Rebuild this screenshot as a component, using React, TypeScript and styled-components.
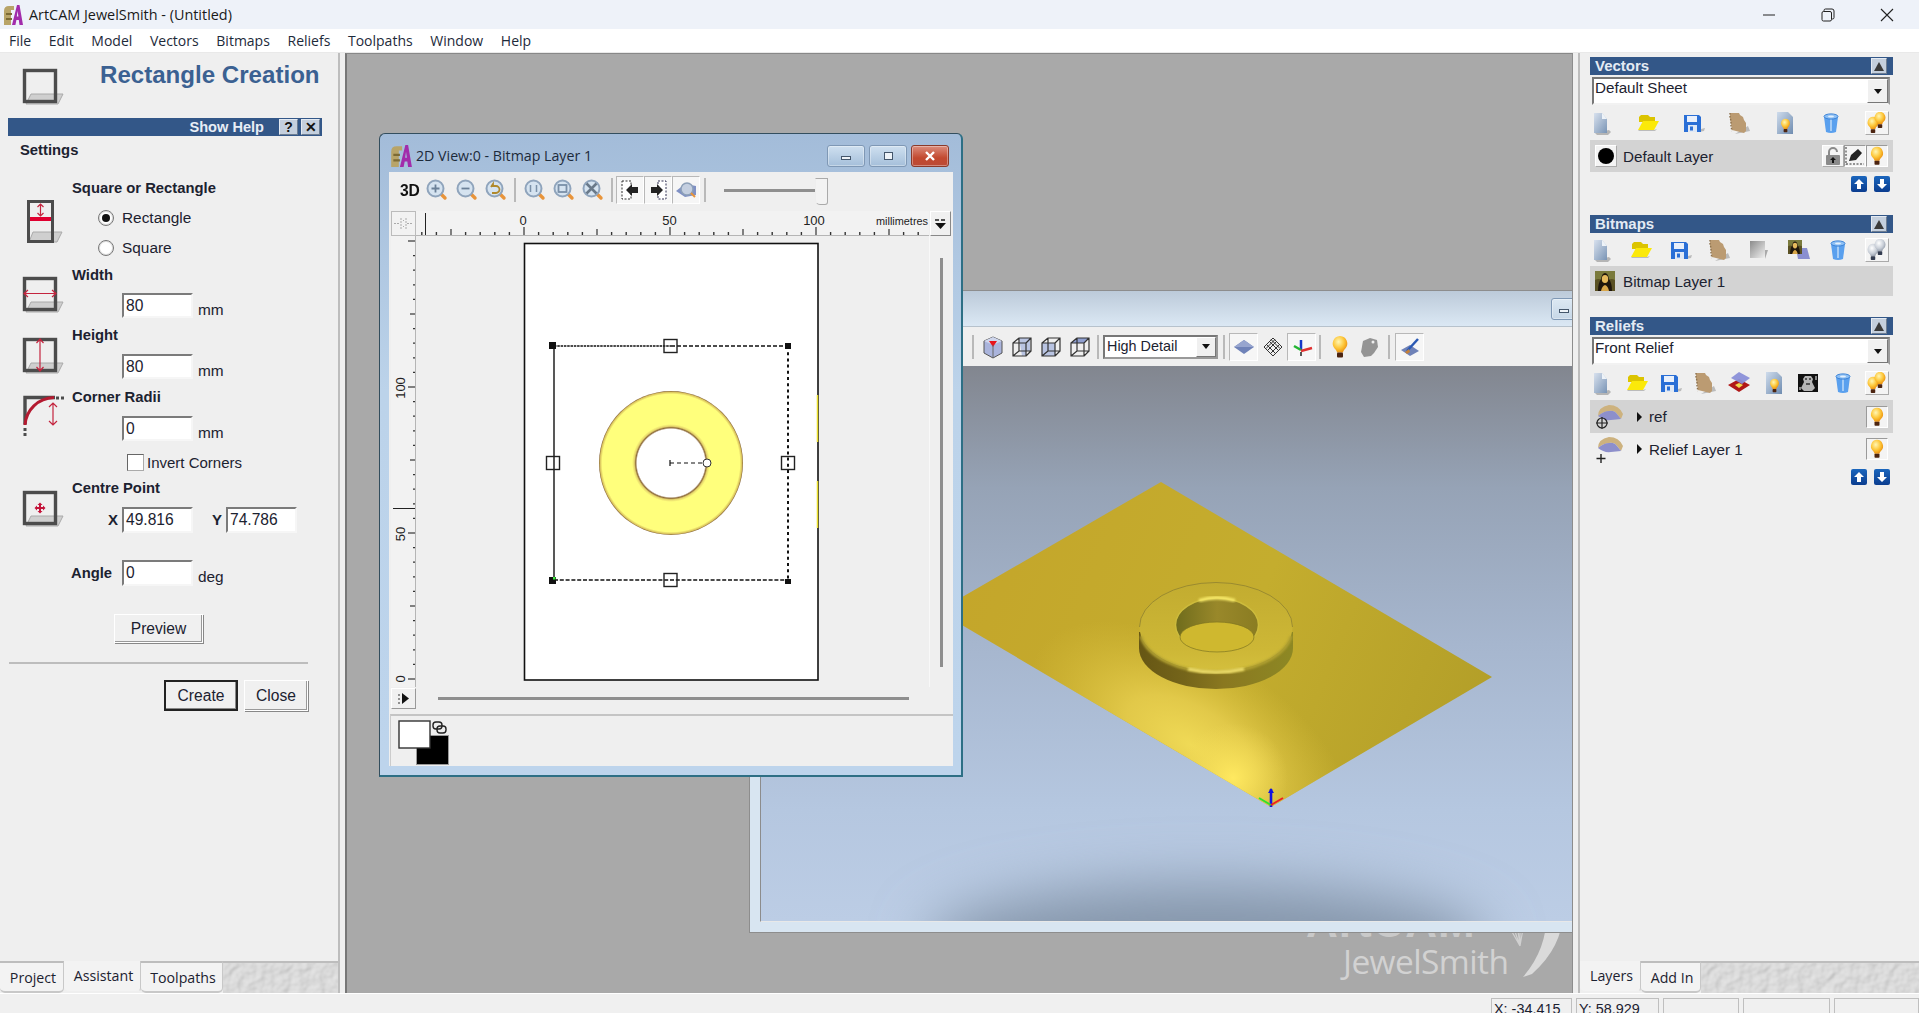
import React from "react";
import styled, { createGlobalStyle } from "styled-components";

const SANS = `"Liberation Sans", Arial, sans-serif`;
const UI = `"Open Sans", "Noto Sans", sans-serif`;
const INK = "#1c2230";
const PANEL = "#efefef";
const BLUE = "#335788";

const Global = createGlobalStyle`
  html, body { margin: 0; height: 100%; overflow: hidden; background: ${PANEL}; }
  #root { height: 100%; }
  * { box-sizing: border-box; }
`;

const Shell = styled.div`
  width: 100%; height: 100vh; display: grid;
  grid-template-rows: 29px 24px minmax(0, 1fr) 20px;
  font-family: ${SANS}; color: ${INK}; overflow: hidden;
`;

/* ---------- title & menu ---------- */
const TitleBar = styled.header`
  background: #eef2f9; display: flex; align-items: center; padding-left: 2px;
  font-family: ${UI}; font-size: 14.4px; color: #1a1a1a; position: relative;
`;
const TitleText = styled.span`margin-left: 5px;`;
const WinControls = styled.div`margin-left: auto; display: flex; height: 100%; padding-right: 3px;`;
const WinControl = styled.div`width: 59px; display: flex; align-items: center; justify-content: center;`;
const MenuBar = styled.nav`
  background: #fff; display: flex; align-items: center; font-family: ${UI}; font-size: 14px;
  color: #1d2a3a; padding-left: 9px; gap: 17.65px; border-bottom: 1px solid #e9e9e9;
`;

/* ---------- main columns ---------- */
const Main = styled.main`display: flex; min-height: 0;`;
const LeftPanel = styled.aside`
  width: 340px; flex: none; background: ${PANEL}; border-right: 2px solid #bdbdbd;
  display: flex; flex-direction: column;
`;
const Gutter = styled.div`width: 5px; flex: none; background: ${PANEL};`;
const Mdi = styled.div`
  flex: 1; position: relative; overflow: hidden; background: #a9a9a9;
  border-left: 2px solid #777; border-right: 1px solid #8d8d8d; border-top: 1px solid #888;
`;
const RightPanel = styled.aside`
  width: 341px; flex: none; background: ${PANEL}; border-left: 2px solid #bdbdbd;
  display: flex; flex-direction: column; padding-left: 10px;
`;

/* ---------- left panel ---------- */
const PanelBody = styled.div`flex: 1; min-height: 0;`;
const FormHead = styled.div`height: 65px; display: flex; padding: 15px 0 0 22px;`;
const FormTitle = styled.h1`
  margin: -9px 0 0 36px; font-size: 24.1px; line-height: 32px; font-weight: bold; color: #3b6192;
`;
const HelpBar = styled.div`
  margin-left: 8px; width: 314px; height: 18px; background: ${BLUE}; color: #e8eef6;
  display: flex; align-items: center; justify-content: flex-end; padding-right: 2px; gap: 3px;
  font-weight: bold; font-size: 14.6px;
`;
const HelpLabel = styled.span`margin-right: 12px;`;
const MiniBtn = styled.span`
  width: 19px; height: 16px; background: #c4cfdd; color: #111; font-size: 14px; font-weight: bold;
  display: flex; align-items: center; justify-content: center; line-height: 1;
  border: 1px solid; border-color: #e4eaf2 #6d7d92 #6d7d92 #e4eaf2;
`;
const SettingsLabel = styled.div`margin: 4px 0 0 20px; font: bold 14.8px/20px ${SANS};`;
const Section = styled.section<{ $top: number }>`
  display: grid; grid-template-columns: 72px 1fr; margin-top: ${(p) => p.$top}px;
`;
const IconSlot = styled.div<{ $x: number; $y: number }>`padding: ${(p) => p.$y}px 0 0 ${(p) => p.$x}px;`;
const FieldLabel = styled.div`font: bold 14.8px/20px ${SANS}; white-space: nowrap;`;
const RadioRow = styled.label<{ $top?: number }>`
  display: flex; align-items: center; height: 30px; padding-left: 26px; gap: 8px; font-size: 15.4px;
  margin-top: ${(p) => p.$top ?? 0}px;
`;
const Radio = styled.span<{ $on?: boolean }>`
  width: 16px; height: 16px; border-radius: 50%; background: #fff; border: 1.5px solid #777;
  box-shadow: inset 0 0 0 1px #ddd; display: flex; align-items: center; justify-content: center;
  &::after { content: ""; width: 8px; height: 8px; border-radius: 50%; background: ${(p) => (p.$on ? "#111" : "transparent")}; }
`;
const FieldRow = styled.div<{ $top: number; $left?: number }>`
  display: flex; margin-top: ${(p) => p.$top}px; padding-left: ${(p) => p.$left ?? 50}px;
`;
const TextBox = styled.div<{ $h?: number }>`
  width: 71px; height: ${(p) => p.$h ?? 25}px; background: #fff; font-size: 15.6px; padding-left: 2px;
  display: flex; align-items: center; line-height: 1; flex: none;
  border: 2px solid; border-color: #7b7b7b #f6f6f6 #f6f6f6 #7b7b7b;
`;
const Unit = styled.span`margin: 9px 0 0 5px; font-size: 15.4px; line-height: 16px;`;
const AxisLabel = styled.span<{ $gap?: number }>`
  width: 14px; margin-left: ${(p) => p.$gap ?? 0}px; font: bold 15px/26px ${SANS};
`;
const CheckRow = styled.div`display: flex; align-items: center; gap: 3px; margin-top: 13px; padding-left: 55px; font-size: 15px; height: 16px;`;
const CheckBox = styled.span`
  width: 17px; height: 17px; background: #fff; border: 1.5px solid; border-color: #666 #aaa #aaa #666;
`;
const AngleRow = styled.div`display: flex; margin-top: 27px; padding-left: 71px;`;
const AngleLabel = styled.span`width: 51px; font: bold 14.8px/26px ${SANS};`;
const PushBtn = styled.div<{ $w: number; $h: number; $default?: boolean }>`
  width: ${(p) => p.$w}px; height: ${(p) => p.$h}px; background: #f0f0f0; font-size: 15.6px;
  display: flex; align-items: center; justify-content: center;
  border: ${(p) => (p.$default ? "2px solid #222" : "1px solid #fff")};
  box-shadow: ${(p) => (p.$default ? "inset -1px -1px 0 #888" : "1px 1px 0 #888, inset -1px -1px 0 #999")};
`;
const PreviewRow = styled.div`margin-top: 28px; padding-left: 114px;`;
const FormRule = styled.hr`margin: 19px 0 0 9px; width: 299px; height: 2px; background: #bdbdbd; border: 0;`;
const ActionRow = styled.div`display: flex; justify-content: flex-end; gap: 6px; margin-top: 16px; padding-right: 30px;`;

/* ---------- tabs ---------- */
const TabStrip = styled.div`height: 32px; flex: none; display: flex; overflow: hidden;`;
const RightTabs = styled(TabStrip)`margin-left: -10px;`;
const Tab = styled.div<{ $w: number; $active?: boolean }>`
  width: ${(p) => p.$w}px; flex: none; background: #f3f3f3; font-family: ${UI}; font-size: 14.2px;
  display: flex; justify-content: center; align-items: ${(p) => (p.$active ? "flex-start" : "center")};
  padding: ${(p) => (p.$active ? 5 : 0)}px 0 0 3px; border-radius: 0 0 5px 5px;
  border-top: ${(p) => (p.$active ? "0" : "2px solid #bdbdbd")};
  border-bottom: 2px solid ${(p) => (p.$active ? PANEL : "#c8c8c8")};
  border-right: 1px solid #c8c8c8; color: ${INK};
`;
const TabFiller = styled.div`flex: 1; background: #dcdcdc; border-top: 2px solid #bdbdbd; min-width: 0; line-height: 0;`;
const Texture = () => (
  <svg width="100%" height="100%">
    <filter id="grain" x="0" y="0" width="100%" height="100%">
      <feTurbulence type="fractalNoise" baseFrequency=".11" numOctaves="2" seed="4" />
      <feDiffuseLighting lightingColor="#e6e6e6" surfaceScale="1.1">
        <feDistantLight azimuth={45} elevation={62} />
      </feDiffuseLighting>
    </filter>
    <rect width="100%" height="100%" filter="url(#grain)" />
  </svg>
);

/* ---------- right panel ---------- */
const PanelHeader = styled.div<{ $top?: number }>`
  width: 303px; height: 18px; background: ${BLUE}; color: #e4ebf4; font: bold 15px/18px ${SANS};
  padding-left: 5px; display: flex; justify-content: space-between; align-items: center; padding-right: 6px;
  margin-top: ${(p) => p.$top ?? 0}px; flex: none;
`;
const Collapse = styled.span`
  width: 16px; height: 16px; background: #c4cfdd; display: flex; align-items: center; justify-content: center;
  border: 1px solid; border-color: #e4eaf2 #6d7d92 #6d7d92 #e4eaf2;
  &::after { content: ""; border: 5px solid transparent; border-top: 0; border-bottom: 9px solid #3a3a3a; }
`;
const Combo = styled.div`
  width: 298px; height: 28px; margin: 2px 0 0 2px; background: #fff; font-size: 15.2px; padding: 0 0 0 1px;
  line-height: 18px; display: flex; justify-content: space-between; flex: none;
  border: 2px solid; border-color: #777 #999 #f2f2f2 #777;
`;
const ComboArrow = styled.span`
  width: 21px; height: 24px; margin-top: 0; background: #f0f0f0; display: flex; align-items: center; justify-content: center;
  border: 1px solid; border-color: #fff #777 #777 #fff;
  &::after { content: ""; border: 4.5px solid transparent; border-bottom: 0; border-top: 5px solid #111; }
`;
const IconRow = styled.div<{ $h: number }>`
  width: 300px; margin-left: -1px; height: ${(p) => p.$h}px; display: flex; justify-content: space-between; align-items: center; flex: none;
`;
const LayerRow = styled.div<{ $h: number; $on?: boolean }>`
  width: 303px; height: ${(p) => p.$h}px; background: ${(p) => (p.$on ? "#d3d3d3" : "transparent")};
  display: flex; align-items: center; padding: 0 5px; font-size: 15.2px; flex: none;
`;
const LayerGlyph = styled.span<{ $w: number }>`width: ${(p) => p.$w}px; flex: none; display: flex; align-items: center;`;
const LayerName = styled.span`flex: 1;`;
const ExpandMark = styled.span`
  width: 0; height: 0; border: 5px solid transparent; border-right: 0; border-left: 5px solid #111; margin-right: 7px; flex: none;
`;
const ToggleCell = styled.span<{ $sunken?: boolean; $size?: number }>`
  width: ${(p) => p.$size ?? 22}px; height: ${(p) => p.$size ?? 22}px; display: flex; align-items: center; justify-content: center; flex: none; background: #f4f4f4;
  border: 1px solid; border-color: ${(p) => (p.$sunken ? "#9a9a9a #fff #fff #9a9a9a" : "#fff #aaa #aaa #fff")};
`;
const OrderRow = styled.div`width: 303px; display: flex; justify-content: flex-end; gap: 7px; padding-right: 3px; margin-top: 4px; flex: none;`;
const OrderBtn = styled.span`
  width: 16px; height: 16px; border-radius: 2px; background: linear-gradient(#1b66bd, #0b3d8f);
  display: flex; align-items: center; justify-content: center; line-height: 0;
`;

/* ---------- document windows ---------- */
const DocWindow = styled.section<{ $x: number; $y: number; $w: number; $h: number }>`
  position: absolute; left: ${(p) => p.$x}px; top: ${(p) => p.$y}px; width: ${(p) => p.$w}px; height: ${(p) => p.$h}px;
  display: flex; flex-direction: column;
`;
const Frame2D = styled(DocWindow)`
  background: linear-gradient(#a3bcd9, #bcd3ea 40%, #bdd4ec);
  border: 1px solid #334e5e; border-bottom: 2px solid #2d6f85; border-right: 2px solid #2d6f85;
  border-radius: 6px 6px 0 0; padding: 0 8px 9px 9px; z-index: 2;
`;
const Frame3D = styled(DocWindow)`
  background: #d8e5f1; border: 1px solid #8d8d8d; padding: 0 0 10px 10px;
`;
const DocTitle = styled.div<{ $h: number }>`
  height: ${(p) => p.$h}px; padding-top: 5px; display: flex; align-items: center; flex: none; font-family: ${UI}; font-size: 14.2px; color: #1c2a3a;
`;
const Title3D = styled(DocTitle)`
  margin-left: -10px; padding: 0 2px 0 0; background: linear-gradient(#bccad9, #dbe8f4); border-bottom: 1px solid #b7c2cc; justify-content: flex-end;
`;
const DocName = styled.span`margin-left: 3px; flex: 1;`;
const CapBtn = styled.span<{ $kind?: "close" }>`
  width: 38px; height: 22px; margin-right: 4px; border-radius: 3px; display: flex; align-items: center; justify-content: center;
  background: ${(p) => (p.$kind === "close" ? "linear-gradient(#dc8d7d, #c2492f 60%, #bb4a36)" : "linear-gradient(#cfe0f0, #a5bfda)")};
  border: 1px solid ${(p) => (p.$kind === "close" ? "#8b3a2a" : "#7f98b5")};
  box-shadow: inset 0 0 0 1px rgba(255,255,255,.35);
`;
const CapBtnSmall = styled(CapBtn)`width: 26px; margin: 0 30px 0 0; background: linear-gradient(#dce8f3, #c7d7e7);`;
const CapGlyph = styled.span<{ $kind: "min" | "max" }>`
  display: block; border: 1.5px solid #44566b; background: #eef3f8;
  width: ${(p) => (p.$kind === "min" ? 10 : 9)}px; height: ${(p) => (p.$kind === "min" ? 4 : 8)}px;
  margin-top: ${(p) => (p.$kind === "min" ? 5 : 0)}px;
`;
const Client = styled.div`flex: 1; min-height: 0; background: ${PANEL}; display: flex; flex-direction: column; position: relative;`;
const Toolbar = styled.div<{ $h: number; $pad: number }>`
  height: ${(p) => p.$h}px; padding-left: ${(p) => p.$pad}px; display: flex; align-items: center; flex: none; background: ${PANEL};
`;
const ThreeD = styled.span`font: bold 17px/1 ${SANS}; transform: scaleX(.92); width: 23px; color: #111;`;
const ToolBtn = styled.span<{ $w?: number; $pressed?: boolean }>`
  width: ${(p) => p.$w ?? 29}px; height: 28px; display: flex; align-items: center; justify-content: center; flex: none;
  background: ${(p) => (p.$pressed ? "#f6f6f6" : "transparent")};
  border: 1px solid; border-color: ${(p) => (p.$pressed ? "#b8b8b8 #fff #fff #b8b8b8" : "transparent")};
`;
const ToolSep = styled.span<{ $l?: number; $r?: number }>`
  width: 2px; height: 24px; background: #b9b9b9; flex: none;
  margin: 0 ${(p) => p.$r ?? 4}px 0 ${(p) => p.$l ?? 3}px;
`;
const SliderTrack = styled.span`
  width: 91px; height: 3px; margin-left: 14px; background: #8f8f8f; position: relative; flex: none;
  &::after { content: ""; position: absolute; right: -13px; top: -11px; width: 11px; height: 25px; background: #f3f3f3; border: 1px solid #aaa; border-left-color: #eee; border-radius: 0 0 3px 5px; }
`;
const DetailCombo = styled.span`
  width: 115px; height: 24px; background: #fff; font: 14.4px/1 ${SANS}; display: flex; align-items: center; justify-content: space-between; padding-left: 2px; flex: none;
  border: 2px solid; border-color: #777 #999 #999 #777;
`;
const MiniArrow = styled(ComboArrow)`height: 20px; width: 20px; margin-bottom: 0;`;
const RulerRow = styled.div`margin-top: 3px; height: 25px; display: flex; padding-left: 2px; flex: none; line-height: 0;`;
const RulerCorner = styled.span`width: 25px; height: 25px; flex: none; background: #f2f2f2; border: 1px solid #bbb; display: flex; align-items: center; justify-content: center; line-height: 0;`;
const RulerEnd = styled.span`
  width: 21px; height: 25px; margin-left: 1px; flex: none; display: flex; align-items: center; justify-content: center; line-height: 0;
  background: #f0f0f0; border: 1px solid; border-color: #fff #888 #888 #fff;
`;
const CanvasRow = styled.div`height: 451px; display: flex; padding-left: 2px; flex: none; line-height: 0;`;
const ScrollColumn = styled.div`width: 24px; flex: none; display: flex; justify-content: center; padding: 22px 0 20px; border-left: 1px solid #f8f8f8;`;
const ScrollV = styled.span`width: 3px; height: 100%; background: #8e8e8e;`;
const ScrollRow = styled.div`height: 20px; margin-top: 1px; padding-left: 2px; display: flex; align-items: center; flex: none; border-bottom: 0;`;
const ScrollStart = styled.span`width: 25px; height: 21px; flex: none; background: #f0f0f0; border: 1px solid; border-color: #fff #999 #999 #fff; display: flex; align-items: center; justify-content: center; line-height: 0;`;
const ScrollH = styled.span`width: 471px; height: 3px; margin-left: 22px; background: #8e8e8e;`;
const SwatchPanel = styled.div`margin-top: 6px; margin-left: 1px; flex: 1; border-top: 2px solid #c4c4c4; border-left: 1px solid #ccc; position: relative; padding: 4px 0 0 7px; line-height: 0;`;
const Viewport = styled.div`
  flex: 1; min-height: 0; overflow: hidden; line-height: 0; border-left: 1px solid #8c8c8c; border-bottom: 1px solid #e8e8e8;
  background: linear-gradient(#82868f 0%, #96a3b6 22%, #a6b6ce 50%, #b5c7e0 80%, #bccde5 100%);
`;
const Watermark = styled.div`
  position: absolute; right: 0; bottom: 13px; width: 266px; height: 80px; color: #d2d2d2;
`;
const WatermarkBrand = styled.span`
  position: absolute; left: 0; top: 0; font: bold 44px/44px ${SANS}; letter-spacing: 1px; color: #c9c9c9; white-space: nowrap;
`;
const WatermarkName = styled.span`
  position: absolute; left: 37px; bottom: 0; font: 400 33.5px/38px ${UI}; letter-spacing: -.6px;
`;
const WatermarkMark = styled.svg`position: absolute; left: 180px; top: 0;`;

/* ---------- status ---------- */
const StatusBar = styled.footer`
  background: #f0f0f0; border-top: 1px solid #fff; display: flex; justify-content: flex-end; gap: 4px; overflow: hidden;
`;
const StatusCell = styled.div<{ $w: number }>`
  width: ${(p) => p.$w}px; margin-top: 4px; border: 1px solid #bfbfbf; border-bottom: 0; font: 14.4px/20px ${SANS}; padding-left: 2px; white-space: nowrap;
`;

/* ---------- icons ---------- */
const Ic = ({ s = 24, vb = "0 0 24 24", children }: { s?: number; vb?: string; children: React.ReactNode }) => (
  <svg width={s} height={s} viewBox={vb}>{children}</svg>
);

const FormIcon = ({ w = 42, h = 38, children, vb = "0 0 42 38" }: { w?: number; h?: number; vb?: string; children?: React.ReactNode }) => (
  <svg width={w} height={h} viewBox={vb}>
    <path d="M9 26h32l-5 10H4z" fill="#cfcfcf" stroke="#aaa" />
    <rect x="2.5" y="2.5" width="31" height="31" fill="none" stroke="#4c4c4c" strokeWidth="3.4" />
    {children}
  </svg>
);

const Arrowed = ({ d }: { d: string }) => <path d={d} fill="none" stroke="#c4243e" strokeWidth="1.2" />;

const AppLogo = ({ s = 22 }: { s?: number }) => (
  <svg width={s} height={s} viewBox="0 0 22 22">
    <path d="M2 21V7Q2 2 7 2h5v4H9v15z" fill="#b8a468" />
    <path d="M4 9h6v2H4zM4 14h6v2H4z" fill="#7c6a34" />
    <path d="M10 21L15 1h2.500L21 21h-3.500l-.7-5h-2.400l-1 5zM14.800 12.500h1.600L15.600 7z" fill="#a22cab" />
  </svg>
);

const Mag = ({ children }: { children?: React.ReactNode }) => (
  <Ic>
    <path d="M15 15l5 5" stroke="#e8943a" strokeWidth="3.4" strokeLinecap="round" />
    <circle cx="10.5" cy="10.5" r="8" fill="#d5e3f0" stroke="#8fa4bc" strokeWidth="2" />
    {children}
  </Ic>
);

const PageIcon = () => (
  <Ic>
    <path d="M6 22l14-3 2 2-3 3H8z" fill="#b5b5b5" />
    <defs>
      <linearGradient id="pg" x1="0" y1="0" x2="1" y2="1"><stop offset="0" stopColor="#d8e1ee" /><stop offset="1" stopColor="#7994b5" /></linearGradient>
    </defs>
    <path d="M5 2h8l5 6v14H5z" fill="url(#pg)" />
    <path d="M13 2v6h5z" fill="#eef3f8" />
  </Ic>
);
const FolderIcon = () => (
  <Ic>
    <path d="M4 6l2-2h7l2 2h5v5H4z" fill="#dcc400" />
    <path d="M8 10h16l-5 9H3z" fill="#fbe90a" />
    <path d="M3 19h16l3-1-2 2H4z" fill="#bbb" />
  </Ic>
);
const SaveIcon = () => (
  <Ic>
    <path d="M20 18l4-1-1 3-5 1z" fill="#bbb" />
    <path d="M3 4h15l2 2v15H3z" fill="#2a6fd6" />
    <rect x="6" y="5" width="10" height="6" fill="#e9f0fb" />
    <rect x="7" y="14" width="9" height="7" fill="#dfe8f5" />
    <rect x="9" y="15.5" width="3" height="4" fill="#2a6fd6" />
  </Ic>
);
const ScrapIcon = () => (
  <Ic>
    <path d="M8 23l15-3-2-5z" fill="#bbb" />
    <path d="M3 2h9l1 2 3 2 1 3 2 3v8l-2 2-12-3-1-6-1-5z" fill="#bb9b72" />
    <path d="M3 2v4l1 4v5l1 5" fill="none" stroke="#8d7350" strokeDasharray="1.5 1.5" strokeWidth="1.4" />
  </Ic>
);
const Bulb = ({ s = 24, x = 0, y = 0, grey = false }: { s?: number; x?: number; y?: number; grey?: boolean }) => (
  <svg x={x} y={y} width={s} height={s} viewBox="0 0 24 24">
    <defs>
      <radialGradient id="bulbY" cx=".4" cy=".35" r=".7"><stop offset="0" stopColor="#fff6b4" /><stop offset=".55" stopColor="#fdc73a" /><stop offset="1" stopColor="#e98a0a" /></radialGradient>
      <radialGradient id="bulbG" cx=".4" cy=".35" r=".7"><stop offset="0" stopColor="#fff" /><stop offset=".6" stopColor="#c9cfd8" /><stop offset="1" stopColor="#8f97a5" /></radialGradient>
    </defs>
    <path d="M12 1a7.6 7.6 0 0 0-5 13c1.2 1.2 1.8 2.2 2 3.6h6c.2-1.4.8-2.4 2-3.6a7.6 7.6 0 0 0-5-13z" fill={grey ? "url(#bulbG)" : "url(#bulbY)"} />
    <rect x="9" y="17.6" width="6" height="5" rx="1" fill={grey ? "#333c50" : "#4c2410"} />
  </svg>
);
const BulbPage = () => (
  <Ic>
    <defs><linearGradient id="bp" x1="0" y1="0" x2="1" y2="1"><stop offset="0" stopColor="#cfdcec" /><stop offset="1" stopColor="#6f8cb0" /></linearGradient></defs>
    <path d="M4 1h11l5 5v17H4z" fill="url(#bp)" />
    <Bulb s={15} x={5} y={7} />
  </Ic>
);
const BinIcon = () => (
  <Ic>
    <path d="M5 6h14l-2 15q-5 2-10 0z" fill="#5aa0ee" />
    <path d="M12 7v13" stroke="#a5ccf6" strokeWidth="2" />
    <ellipse cx="12" cy="5.5" rx="7" ry="2.6" fill="#8ec0f5" stroke="#3c84d8" />
    <ellipse cx="12" cy="5.5" rx="3" ry="1" fill="#e3f0fc" />
  </Ic>
);
const BulbsBtn = ({ grey }: { grey?: boolean }) => (
  <ToggleCell $size={24}>
    <svg width="22" height="22" viewBox="0 0 22 22">
      <Bulb s={18} x={-2} y={4} grey={grey} />
      <Bulb s={18} x={5} y={-1} grey={grey} />
    </svg>
  </ToggleCell>
);
const GreyPlate = () => (
  <Ic>
    <defs><linearGradient id="gp" x1="0" y1="0" x2="1" y2="1"><stop offset="0" stopColor="#8b8b8b" /><stop offset="1" stopColor="#f0f0f0" /></linearGradient></defs>
    <rect x="3" y="3" width="15" height="17" fill="url(#gp)" />
    <path d="M18 12l3 0-3 9z" fill="#aaa" />
  </Ic>
);
const Mona = ({ s = 20 }: { s?: number }) => (
  <svg width={s} height={s} viewBox="0 0 20 20">
    <rect width="20" height="20" fill="#5a5124" />
    <path d="M0 0h20v9q-4-2-6 0H6q-2-2-6 0z" fill="#7a7a3c" />
    <path d="M3 20q0-8 3-12 1-6 4-6t4 6q3 4 3 12z" fill="#1f160c" />
    <ellipse cx="10" cy="8" rx="3.2" ry="4" fill="#e5b95c" />
    <path d="M6 20q1-5 4-6 3 1 4 6z" fill="#d8a64a" />
  </svg>
);
const MonaLayer = () => (
  <Ic>
    <path d="M10 10h11l3 11H12z" fill="#8a8fd0" />
    <svg x="2" y="2" width="14" height="14" viewBox="0 0 20 20"><Mona s={20} /></svg>
  </Ic>
);
const ReliefStack = () => (
  <Ic>
    <path d="M12 8l11 6-11 7L1 14z" fill="#b01818" />
    <path d="M12 12l4 2-4 3-4-3z" fill="#f2d84a" />
    <path d="M12 1l11 6-8 6-11-6z" fill="#8a8fd8" opacity=".95" />
  </Ic>
);
const XRay = () => (
  <Ic>
    <rect x="2" y="3" width="20" height="18" fill="#111" />
    <path d="M9 5h6l2 3-1 3 3 6-3 3H8l-3-3 3-6-1-3z" fill="#b5b5b5" />
    <path d="M9 8h2M13 8h2M10 13h4" stroke="#333" strokeWidth="1.4" />
    <path d="M20 5v4M4 16v3" stroke="#fff" />
  </Ic>
);
const ReliefGlyph = ({ mark }: { mark: "target" | "plus" }) => (
  <svg width="30" height="28" viewBox="0 0 30 28">
    <path d="M3 13q0-9 11-11 10 0 14 9l-2 5-4-5q-3-4-8-3-7 1-11 5z" fill="#cdb27e" />
    <path d="M3 13q6-5 11-5 5-1 8 3l4 5-10 1q-7 1-13-4z" fill="#8d8fcb" />
    {mark === "target" ? (
      <g fill="none" stroke="#222" strokeWidth="1.2"><circle cx="7" cy="20" r="5" /><path d="M7 14v12M1 20h12" /></g>
    ) : (
      <path d="M6 19v9M1.500 23.500h9" stroke="#222" strokeWidth="1.4" />
    )}
  </svg>
);
const Up = ({ down }: { down?: boolean }) => (
  <svg width="12" height="12" viewBox="0 0 12 12">
    <path d={down ? "M6 11L1 6h3V1h4v5h3z" : "M6 1l5 5H8v5H4V6H1z"} fill="#fff" />
  </svg>
);
const DefaultLayerDot = () => (
  <ToggleCell>
    <svg width="18" height="18" viewBox="0 0 18 18"><circle cx="9" cy="9" r="8" fill="#000" /></svg>
  </ToggleCell>
);
const Lock = () => (
  <svg width="20" height="20" viewBox="0 0 20 20">
    <path d="M6 9V6a4 4 0 0 1 8 0" fill="none" stroke="#8b8b8b" strokeWidth="2" />
    <rect x="3" y="9" width="14" height="10" rx="1" fill="#8a8a8a" />
    <path d="M10 11l3 3h-2v3H9v-3H7z" fill="#111" />
  </svg>
);
const Pen = () => (
  <svg width="20" height="20" viewBox="0 0 20 20">
    <path d="M1 1v18M1 18h18" stroke="#333" strokeDasharray="2 1.500" />
    <path d="M4 15l2-6 7-6 4 4-6 7z" fill="#222" />
  </svg>
);
const Cube = ({ face }: { face: "iso" | "front" | "right" | "top" }) => (
  <Ic>
    {face === "iso" ? (
      <>
        <path d="M12 2l9 4v12l-9 5-9-5V6z" fill="#aab4dc" stroke="#555" />
        <path d="M3 6l9 4 9-4-9-4z" fill="#cfd6ec" />
        <path d="M8 6h8l-4 6z" fill="#e8141c" />
        <path d="M12 10v13" stroke="#666" />
      </>
    ) : (
      <>
        {face === "front" && <path d="M9 3h11v13H16v4l-4 1z" fill="#b9c4e2" />}
        {face === "right" && <rect x="3" y="8" width="13" height="13" fill="#b9c4e2" />}
        {face === "top" && <path d="M3 8l6-5h12l-5 5z" fill="#8f9fd0" />}
        <path d="M3 8h13v13H3zM9 3h12v13H9zM3 8l6-5M16 8l5-5M3 21l6-5M16 21l5-5" fill="none" stroke="#333" strokeWidth="1.2" />
      </>
    )}
  </Ic>
);

/* ---------- drawings for the 2D view ---------- */
const ticks = (n: number) => Array.from({ length: n }, (_, i) => i);

const HRuler = () => (
  <svg width="513" height="25" viewBox="416 211 513 25" fontFamily={SANS}>
    <rect x="416" y="211" width="513" height="25" fill="#f2f2f2" />
    <path d="M416 235.500h513" stroke="#b5b5b5" />
    {ticks(42).map((i) => {
      const x = 524 + (i - 8) * 14.6;
      const major = (i - 8) % 10 === 0;
      const mid = !major && (i - 8) % 5 === 0;
      return <path key={i} d={`M${x} 235V${major ? 227 : mid ? 229 : 232}`} stroke="#333" strokeWidth={major || mid ? 1.2 : 1.4} />;
    })}
    <path d="M425.500 213V235" stroke="#222" />
    <text x="523" y="225" fontSize="13" textAnchor="middle" fill="#222">0</text>
    <text x="669.500" y="225" fontSize="13" textAnchor="middle" fill="#222">50</text>
    <text x="814" y="225" fontSize="13" textAnchor="middle" fill="#222">100</text>
    <text x="876" y="225" fontSize="11" textLength="52" lengthAdjust="spacingAndGlyphs" fill="#222">millimetres</text>
  </svg>
);

const VRuler = () => (
  <svg width="25" height="451" viewBox="391 236 25 451" fontFamily={SANS}>
    <rect x="391" y="236" width="25" height="451" fill="#f2f2f2" />
    <path d="M415.500 236V687" stroke="#b5b5b5" />
    {ticks(31).map((i) => {
      const y = 679 - i * 14.6;
      const major = i % 10 === 0;
      const mid = !major && i % 5 === 0;
      return <path key={i} d={`M415 ${y}H${major ? 408 : mid ? 410 : 413}`} stroke="#333" strokeWidth="1.2" />;
    })}
    <path d="M393 508.500h22" stroke="#222" />
    <text transform="translate(405 679) rotate(-90)" fontSize="13" textAnchor="middle" fill="#222">0</text>
    <text transform="translate(405 534) rotate(-90)" fontSize="13" textAnchor="middle" fill="#222">50</text>
    <text transform="translate(405 388) rotate(-90)" fontSize="13" textAnchor="middle" fill="#222">100</text>
  </svg>
);

const handle = (x: number, y: number) => (
  <rect key={`${x}-${y}`} x={x - 6.500} y={y - 6.500} width="13" height="13" fill="none" stroke="#222" strokeWidth="1.4" />
);

const Sheet = () => (
  <svg width="513" height="451" viewBox="416 236 513 451">
    <defs>
      <radialGradient id="ringFill" gradientUnits="userSpaceOnUse" cx="671" cy="463" r="72">
        <stop offset="0" stopColor="#fff" />
        <stop offset=".47" stopColor="#fff" />
        <stop offset=".49" stopColor="#8d6a3a" />
        <stop offset=".51" stopColor="#e6d56c" />
        <stop offset=".54" stopColor="#ffff7c" />
        <stop offset=".955" stopColor="#ffff7c" />
        <stop offset=".985" stopColor="#d8c05c" />
        <stop offset="1" stopColor="#7d5a30" />
      </radialGradient>
    </defs>
    <rect x="524.500" y="243.500" width="293.500" height="436.500" fill="#fff" stroke="#111" strokeWidth="1.6" />
    <path d="M817.500 395v47M817.500 481v47" stroke="#e8dc2a" strokeWidth="1.500" />
    <circle cx="671" cy="463" r="72" fill="url(#ringFill)" />
    <g fill="none" stroke="#111">
      <path d="M554 346H671" strokeWidth="1.600" strokeDasharray="2.500 .8" />
      <path d="M671 346H788" strokeWidth="1.400" strokeDasharray="4 2" />
      <path d="M554 346V580" strokeWidth="1.400" />
      <path d="M788 346V580" strokeWidth="2" strokeDasharray="3 3.200" />
      <path d="M554 580H788" strokeWidth="1.400" strokeDasharray="4 1.800" />
      <path d="M670 463H703" strokeWidth="1.200" strokeDasharray="4 3" />
      <path d="M670 460v6" strokeWidth="1.200" />
    </g>
    <rect x="549" y="342" width="7" height="7" fill="#111" />
    <rect x="785" y="343" width="6" height="6" fill="#111" />
    <rect x="549" y="577" width="7" height="7" fill="#111" />
    <rect x="553" y="577" width="2.500" height="2.500" fill="#3cf03c" />
    <rect x="785" y="579" width="6" height="5" fill="#111" />
    {handle(670.500, 346)}{handle(670.500, 580)}{handle(553, 463)}{handle(788, 463)}
    <circle cx="707" cy="463" r="4" fill="#fff" stroke="#333" />
  </svg>
);

const Swatches = () => (
  <svg width="54" height="46" viewBox="0 0 54 46">
    <rect x="18.500" y="15.500" width="32" height="29" fill="#000" stroke="#999" />
    <rect x="1" y="1" width="31" height="27" fill="#fff" stroke="#333" strokeWidth="1.4" />
    <g fill="none" stroke="#222" strokeWidth="1.400">
      <rect x="35" y="2" width="9" height="7" rx="3" />
      <rect x="39" y="6" width="9" height="7" rx="3" />
    </g>
  </svg>
);

/* ---------- drawing for the 3D view ---------- */
const Scene = () => (
  <svg width="812" height="556" viewBox="760 366 812 556">
    <defs>
      <linearGradient id="plate" gradientUnits="userSpaceOnUse" x1="940" y1="520" x2="1490" y2="740">
        <stop offset="0" stopColor="#c4a52a" />
        <stop offset=".55" stopColor="#c4ad2e" />
        <stop offset="1" stopColor="#b29e28" />
      </linearGradient>
      <radialGradient id="glow" gradientUnits="userSpaceOnUse" cx="1190" cy="745" r="150" gradientTransform="translate(1190 745) rotate(32) scale(1.2 .62) translate(-1190 -745)">
        <stop offset="0" stopColor="#f0da56" />
        <stop offset=".4" stopColor="#e9d050" stopOpacity=".8" />
        <stop offset="1" stopColor="#dcc23e" stopOpacity="0" />
      </radialGradient>
      <radialGradient id="tip" gradientUnits="userSpaceOnUse" cx="1232" cy="778" r="55">
        <stop offset="0" stopColor="#ffe960" />
        <stop offset="1" stopColor="#f4dc58" stopOpacity="0" />
      </radialGradient>
      <linearGradient id="wall" x1="0" y1="0" x2="1" y2="0">
        <stop offset="0" stopColor="#665614" />
        <stop offset=".3" stopColor="#75651a" />
        <stop offset=".55" stopColor="#8a7820" />
        <stop offset="1" stopColor="#8d8824" />
      </linearGradient>
      <linearGradient id="cap" x1="0" y1="0" x2="0" y2="1">
        <stop offset="0" stopColor="#c2ac30" />
        <stop offset=".75" stopColor="#cdb736" />
        <stop offset="1" stopColor="#d4bf3d" />
      </linearGradient>
      <linearGradient id="bore" x1="0" y1="0" x2="1" y2="0">
        <stop offset="0" stopColor="#6f6c1c" />
        <stop offset=".5" stopColor="#99882a" />
        <stop offset="1" stopColor="#8a7c22" />
      </linearGradient>
      <filter id="blur3d" x="-30%" y="-80%" width="160%" height="260%"><feGaussianBlur stdDeviation="28" /></filter>
      <filter id="soft" x="-20%" y="-60%" width="140%" height="220%"><feGaussianBlur stdDeviation="1" /></filter>
    </defs>
    <ellipse cx="1206" cy="945" rx="280" ry="62" fill="#8596ab" filter="url(#blur3d)" />
    <path d="M1160 482L1491 677 1270 807 937 611z" fill="url(#plate)" />
    <path d="M1160 482L1491 677 1270 807 937 611z" fill="url(#glow)" />
    <path d="M1160 482L1491 677 1270 807 937 611z" fill="url(#tip)" />
    <path d="M1138 632h154v16a77 41 0 0 1-154 0z" fill="url(#wall)" />
    <ellipse cx="1215" cy="627" rx="76.500" ry="44.500" fill="url(#cap)" />
    <path d="M1138.500 627a76.500 44.500 0 0 1 153 0" fill="none" stroke="#8f8230" strokeWidth=".8" />
    <path d="M1140 636a76 43 0 0 0 150 0" fill="none" stroke="#b3a232" strokeWidth="3" filter="url(#soft)" />
    <path d="M1187 669a76 44 0 0 0 56 0" fill="none" stroke="#f2e270" strokeWidth="3" filter="url(#soft)" />
    <ellipse cx="1216" cy="625" rx="41.500" ry="27" fill="url(#bore)" stroke="#cdbb3c" strokeWidth="1.500" />
    <path d="M1198 600.500a41.500 27 0 0 1 36 0" fill="none" stroke="#f6e868" strokeWidth="3.400" filter="url(#soft)" />
    <path d="M1179 637a37 15 0 0 1 74 0 37 15 0 0 1-74 0z" fill="#cfb82f" stroke="#7e7420" strokeWidth=".7" />
    <path d="M1270 807v-18" stroke="#1414e0" strokeWidth="2.600" />
    <path d="M1267 793l3-5 3 5" fill="#1414e0" />
    <path d="M1270 805l-12-7" stroke="#2ee02e" strokeWidth="2" />
    <path d="M1270 805l12-7" stroke="#ee2020" strokeWidth="2" />
  </svg>
);

const App = () => (
  <Shell>
    <Global />
    <TitleBar>
      <AppLogo />
      <TitleText>ArtCAM JewelSmith - (Untitled)</TitleText>
      <WinControls>
        <WinControl><svg width="14" height="14" viewBox="0 0 14 14"><path d="M1 7h12" stroke="#222" strokeWidth="1" /></svg></WinControl>
        <WinControl><svg width="14" height="14" viewBox="0 0 14 14"><path d="M3 3.500V2.500a1.500 1.500 0 0 1 1.500-1.500H11a2 2 0 0 1 2 2v6.500A1.500 1.500 0 0 1 11.500 11H10.500" fill="none" stroke="#222" /><rect x="1" y="3.500" width="9.500" height="9.500" rx="1.500" fill="none" stroke="#222" /></svg></WinControl>
        <WinControl><svg width="14" height="14" viewBox="0 0 14 14"><path d="M1 1l12 12M13 1L1 13" stroke="#222" strokeWidth="1.100" /></svg></WinControl>
      </WinControls>
    </TitleBar>
    <MenuBar>
      {["File", "Edit", "Model", "Vectors", "Bitmaps", "Reliefs", "Toolpaths", "Window", "Help"].map((m) => <span key={m}>{m}</span>)}
    </MenuBar>
    <Main>
      <LeftPanel>
        <PanelBody>
          <FormHead>
            <FormIcon />
            <FormTitle>Rectangle Creation</FormTitle>
          </FormHead>
          <HelpBar>
            <HelpLabel>Show Help</HelpLabel>
            <MiniBtn>?</MiniBtn>
            <MiniBtn>✕</MiniBtn>
          </HelpBar>
          <SettingsLabel>Settings</SettingsLabel>
          <Section $top={18}>
            <IconSlot $x={27} $y={22}>
              <svg width="36" height="44" viewBox="0 0 36 44">
                <path d="M6 32h29l-5 10H2z" fill="#cfcfcf" stroke="#aaa" />
                <rect x="1.500" y="1.500" width="24" height="40" fill="none" stroke="#4c4c4c" strokeWidth="3" />
                <rect x="3" y="17" width="21" height="4" fill="#e00030" />
                <Arrowed d="M13.500 4v12M10.500 7l3-3 3 3M10.500 13l3 3 3-3" />
              </svg>
            </IconSlot>
            <div>
              <FieldLabel>Square or Rectangle</FieldLabel>
              <RadioRow $top={5}><Radio $on />Rectangle</RadioRow>
              <RadioRow><Radio />Square</RadioRow>
            </div>
          </Section>
          <Section $top={2}>
            <IconSlot $x={22} $y={11}>
              <FormIcon><Arrowed d="M2 17.500h32M6 14l-4 3.500 4 3.500M30 14l4 3.500-4 3.500" /></FormIcon>
            </IconSlot>
            <div>
              <FieldLabel>Width</FieldLabel>
              <FieldRow $top={8}><TextBox>80</TextBox><Unit>mm</Unit></FieldRow>
            </div>
          </Section>
          <Section $top={7}>
            <IconSlot $x={22} $y={12}>
              <FormIcon><Arrowed d="M18 2v32M14.500 6L18 2l3.500 4M14.500 30l3.500 4 3.500-4" /></FormIcon>
            </IconSlot>
            <div>
              <FieldLabel>Height</FieldLabel>
              <FieldRow $top={9}><TextBox>80</TextBox><Unit>mm</Unit></FieldRow>
            </div>
          </Section>
          <Section $top={8}>
            <IconSlot $x={22} $y={8}>
              <svg width="42" height="44" viewBox="0 0 42 44">
                <path d="M33 2.500H3v27" fill="none" stroke="#4c4c4c" strokeWidth="3.400" />
                <path d="M32 2.500C16 3 4 15 3 30" fill="none" stroke="#b41a30" strokeWidth="3" />
                <path d="M34 3h8M3 33v8" stroke="#4c4c4c" strokeWidth="3" strokeDasharray="3 2" fill="none" />
                <Arrowed d="M31 8v22M27 12l4-4 4 4M27 26l4 4 4-4" />
              </svg>
            </IconSlot>
            <div>
              <FieldLabel>Corner Radii</FieldLabel>
              <FieldRow $top={9}><TextBox>0</TextBox><Unit>mm</Unit></FieldRow>
              <CheckRow><CheckBox />Invert Corners</CheckRow>
            </div>
          </Section>
          <Section $top={8}>
            <IconSlot $x={22} $y={12}>
              <FormIcon>
                <path d="M18 12.500l2.500 2.500h-1.500v2h2v-1.500l2.500 2.500-2.500 2.500v-1.500h-2v2h1.500l-2.500 2.500-2.500-2.500h1.500v-2h-2v1.500l-2.500-2.500 2.500-2.500v1.500h2v-2h-1.500z" fill="#c4143a" />
              </FormIcon>
            </IconSlot>
            <div>
              <FieldLabel>Centre Point</FieldLabel>
              <FieldRow $top={9} $left={36}>
                <AxisLabel>X</AxisLabel><TextBox $h={26}>49.816</TextBox>
                <AxisLabel $gap={19}>Y</AxisLabel><TextBox $h={26}>74.786</TextBox>
              </FieldRow>
            </div>
          </Section>
          <AngleRow><AngleLabel>Angle</AngleLabel><TextBox $h={26}>0</TextBox><Unit>deg</Unit></AngleRow>
          <PreviewRow><PushBtn $w={89} $h={29}>Preview</PushBtn></PreviewRow>
          <FormRule />
          <ActionRow>
            <PushBtn $w={74} $h={31} $default>Create</PushBtn>
            <PushBtn $w={64} $h={31}>Close</PushBtn>
          </ActionRow>
        </PanelBody>
        <TabStrip>
          <Tab $w={64}>Project</Tab>
          <Tab $w={77} $active>Assistant</Tab>
          <Tab $w={82}>Toolpaths</Tab>
          <TabFiller><Texture /></TabFiller>
        </TabStrip>
      </LeftPanel>
      <Gutter />
      <Mdi>
        <Watermark>
          <WatermarkBrand>ArtCAM</WatermarkBrand>
          <WatermarkMark width="86" height="80" viewBox="0 0 86 80">
            <g stroke="#d0d0d0" strokeWidth="1.200" fill="none">
              <path d="M34 46L8 0M34 46L18 0M34 46L28 0M34 46V0M34 46L42 0" />
            </g>
            <path d="M60 0h16q6 42-30 74l-9 3q28-32 23-77z" fill="#dadada" />
          </WatermarkMark>
          <WatermarkName>JewelSmith</WatermarkName>
        </Watermark>
        <Frame3D $x={402} $y={236} $w={917} $h={643}>
          <Title3D $h={36}>
            <CapBtnSmall><CapGlyph $kind="min" /></CapBtnSmall>
            <CapBtnSmall><CapGlyph $kind="max" /></CapBtnSmall>
          </Title3D>
          <Client>
            <Toolbar $h={39} $pad={212}>
              <ToolSep $l={0} />
              <ToolBtn $w={29}><Cube face="iso" /></ToolBtn>
              <ToolBtn $w={29}><Cube face="front" /></ToolBtn>
              <ToolBtn $w={29}><Cube face="right" /></ToolBtn>
              <ToolBtn $w={29}><Cube face="top" /></ToolBtn>
              <ToolSep $l={3} $r={4} />
              <DetailCombo>High Detail<MiniArrow /></DetailCombo>
              <ToolSep $l={5} $r={4} />
              <ToolBtn $pressed>
                <Ic><path d="M12 5l10 7-10 7-10-7z" fill="#6f82b8" /><path d="M12 5l10 7H2z" fill="#97a5cf" /></Ic>
              </ToolBtn>
              <ToolBtn>
                <Ic><g fill="none" stroke="#333" strokeWidth="1"><path d="M12 3l9 9-9 9-9-9z" /><path d="M8 6l9 9M5 9l9 9M10 4.500l9 9M16 6l-9 9M19 9l-9 9M14 4.500l-9 9" /></g></Ic>
              </ToolBtn>
              <ToolBtn $pressed>
                <Ic><path d="M11 15V5" stroke="#1437c8" strokeWidth="2.500" /><path d="M11 15L4 11" stroke="#22b432" strokeWidth="2.500" /><path d="M11 16l11-3" stroke="#e03030" strokeWidth="2.500" /><path d="M11 17v4" stroke="#222" strokeWidth="1.500" /></Ic>
              </ToolBtn>
              <ToolSep $l={3} $r={4} />
              <ToolBtn><Bulb /></ToolBtn>
              <ToolBtn>
                <Ic><path d="M6 6l7-3 7 2 1 7-4 6-3 3-7 1-3-5z" fill="#949494" /><circle cx="16" cy="7" r="1.500" fill="#eee" /></Ic>
              </ToolBtn>
              <ToolSep $l={5} $r={5} />
              <ToolBtn $pressed>
                <Ic><path d="M3 15l9-5 9 6-9 5z" fill="#6f82b8" /><path d="M9 16L20 4" stroke="#2a59b4" strokeWidth="2.500" /><path d="M7 17l4-3 1 3-3 2z" fill="#c4803a" /></Ic>
              </ToolBtn>
            </Toolbar>
            <Viewport><Scene /></Viewport>
          </Client>
        </Frame3D>
        <Frame2D $x={32} $y={79} $w={584} $h={644}>
          <DocTitle $h={38}>
            <AppLogo s={24} />
            <DocName>2D View:0 - Bitmap Layer 1</DocName>
            <CapBtn><CapGlyph $kind="min" /></CapBtn>
            <CapBtn><CapGlyph $kind="max" /></CapBtn>
            <CapBtn $kind="close">
              <svg width="12" height="10" viewBox="0 0 12 10"><path d="M2 1l8 8M10 1L2 9" stroke="#fff" strokeWidth="2.400" /></svg>
            </CapBtn>
          </DocTitle>
          <Client>
            <Toolbar $h={36} $pad={10}>
              <ThreeD>3D</ThreeD>
              <ToolBtn $w={30}><Mag><path d="M6.500 10.500h8M10.500 6.500v8" stroke="#6a8098" strokeWidth="1.800" /></Mag></ToolBtn>
              <ToolBtn $w={29}><Mag><path d="M6.500 10.500h8" stroke="#6a8098" strokeWidth="1.800" /></Mag></ToolBtn>
              <ToolBtn $w={30}><Mag><path d="M7 9l2-3v2h3a3 3 0 0 1 0 7H8" fill="none" stroke="#b0892c" strokeWidth="1.800" /></Mag></ToolBtn>
              <ToolSep $l={3} $r={4} />
              <ToolBtn $w={29}><Mag><path d="M7.500 14V7M13.500 14V7" stroke="#7a90a8" strokeWidth="1.500" /><path d="M10 8.500v.1M10 12v.1" stroke="#7a90a8" strokeWidth="1.500" /></Mag></ToolBtn>
              <ToolBtn $w={29}><Mag><rect x="6.500" y="7" width="8" height="7" fill="none" stroke="#7a90a8" strokeWidth="1.800" /></Mag></ToolBtn>
              <ToolBtn $w={29}><Mag><path d="M5.500 5.500l10 10M15.500 5.500l-10 10" stroke="#6a7a8a" strokeWidth="2.600" /></Mag></ToolBtn>
              <ToolSep $l={4} $r={3} />
              <ToolBtn $w={28} $pressed>
                <Ic><path d="M4 3h9v18H4z" fill="#fff" stroke="#333" strokeDasharray="2 1.500" /><path d="M8 12l6-6v3h6v6h-6v3z" fill="#222" /></Ic>
              </ToolBtn>
              <ToolBtn $w={28} $pressed>
                <Ic><path d="M12 3h8v18h-8z" fill="#fff" stroke="#335" strokeDasharray="2 1.500" /><path d="M17 12l-6-6v3H5v6h6v3z" fill="#222" /></Ic>
              </ToolBtn>
              <ToolBtn $w={28} $pressed>
                <Ic><path d="M2 13l9-7 11 2v9l-11 2z" fill="#7f90c4" /><circle cx="13" cy="11" r="6" fill="#c4cfe0" stroke="#8da0b8" strokeWidth="1.500" /><path d="M17 15l4 4" stroke="#e8943a" strokeWidth="2" /></Ic>
              </ToolBtn>
              <ToolSep $l={4} />
              <SliderTrack />
            </Toolbar>
            <RulerRow>
              <RulerCorner>
                <svg width="19" height="13" viewBox="0 0 19 13"><path d="M0 6.500h6M13 6.500h6M7 1v11M12 1v11M9.500 3v1M9.500 9v1" stroke="#aaa" strokeDasharray="2 1" /></svg>
              </RulerCorner>
              <HRuler />
              <RulerEnd>
                <svg width="13" height="13" viewBox="0 0 13 13"><path d="M1 3h11" stroke="#222" strokeWidth="1.500" strokeDasharray="4 2" /><path d="M1 6h11l-5.500 6z" fill="#111" /></svg>
              </RulerEnd>
            </RulerRow>
            <CanvasRow>
              <VRuler />
              <Sheet />
              <ScrollColumn><ScrollV /></ScrollColumn>
            </CanvasRow>
            <ScrollRow>
              <ScrollStart>
                <svg width="13" height="13" viewBox="0 0 13 13"><path d="M2 2v2M2 6v2M2 10v2" stroke="#333" /><path d="M5 1l7 5.500-7 5.500z" fill="#111" /></svg>
              </ScrollStart>
              <ScrollH />
            </ScrollRow>
            <SwatchPanel><Swatches /></SwatchPanel>
          </Client>
        </Frame2D>
      </Mdi>
      <Gutter />
      <RightPanel>
        <PanelHeader $top={4}>Vectors<Collapse /></PanelHeader>
        <Combo>Default Sheet<ComboArrow /></Combo>
        <IconRow $h={35}>
          <PageIcon /><FolderIcon /><SaveIcon /><ScrapIcon /><BulbPage /><BinIcon /><BulbsBtn />
        </IconRow>
        <LayerRow $h={32} $on>
          <LayerGlyph $w={28}><DefaultLayerDot /></LayerGlyph>
          <LayerName>Default Layer</LayerName>
          <ToggleCell><Lock /></ToggleCell>
          <ToggleCell $sunken><Pen /></ToggleCell>
          <ToggleCell $sunken><Bulb s={20} /></ToggleCell>
        </LayerRow>
        <OrderRow><OrderBtn><Up /></OrderBtn><OrderBtn><Up down /></OrderBtn></OrderRow>
        <PanelHeader $top={23}>Bitmaps<Collapse /></PanelHeader>
        <IconRow $h={33}>
          <PageIcon /><FolderIcon /><SaveIcon /><ScrapIcon /><GreyPlate /><MonaLayer /><BinIcon /><BulbsBtn grey />
        </IconRow>
        <LayerRow $h={30} $on>
          <LayerGlyph $w={28}><Mona /></LayerGlyph>
          <LayerName>Bitmap Layer 1</LayerName>
        </LayerRow>
        <PanelHeader $top={21}>Reliefs<Collapse /></PanelHeader>
        <Combo>Front Relief<ComboArrow /></Combo>
        <IconRow $h={35}>
          <PageIcon /><FolderIcon /><SaveIcon /><ScrapIcon /><ReliefStack /><BulbPage /><XRay /><BinIcon /><BulbsBtn />
        </IconRow>
        <LayerRow $h={33} $on>
          <LayerGlyph $w={42}><ReliefGlyph mark="target" /></LayerGlyph>
          <ExpandMark />
          <LayerName>ref</LayerName>
          <ToggleCell $sunken><Bulb s={20} /></ToggleCell>
        </LayerRow>
        <LayerRow $h={32}>
          <LayerGlyph $w={42}><ReliefGlyph mark="plus" /></LayerGlyph>
          <ExpandMark />
          <LayerName>Relief Layer 1</LayerName>
          <ToggleCell $sunken><Bulb s={20} /></ToggleCell>
        </LayerRow>
        <OrderRow><OrderBtn><Up /></OrderBtn><OrderBtn><Up down /></OrderBtn></OrderRow>
        <PanelBody />
        <RightTabs>
          <Tab $w={61} $active>Layers</Tab>
          <Tab $w={60}>Add In</Tab>
          <TabFiller><Texture /></TabFiller>
        </RightTabs>
      </RightPanel>
    </Main>
    <StatusBar>
      <StatusCell $w={81}>X: -34.415</StatusCell>
      <StatusCell $w={83}>Y: 58.929</StatusCell>
      <StatusCell $w={76} />
      <StatusCell $w={87} />
      <StatusCell $w={85} />
    </StatusBar>
  </Shell>
);

export default App;
